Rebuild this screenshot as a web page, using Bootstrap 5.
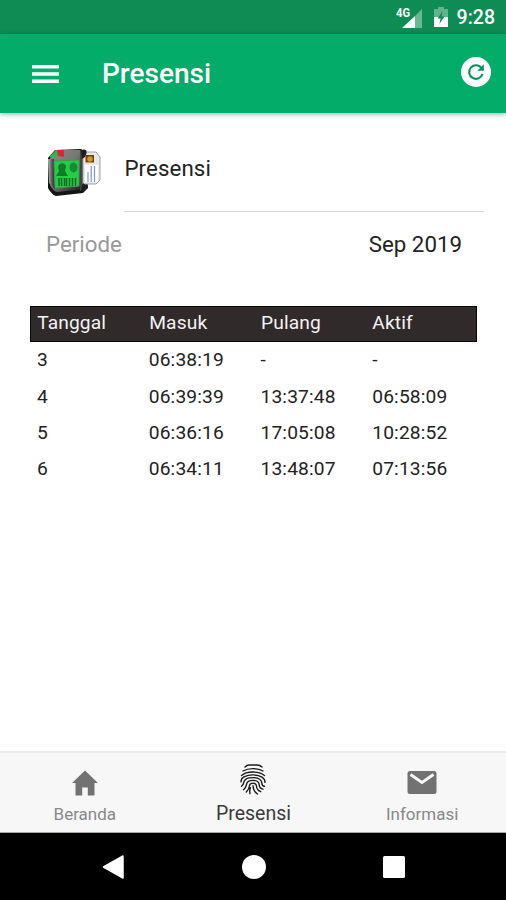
<!DOCTYPE html>
<html lang="id">
<head>
<meta charset="utf-8">
<meta name="viewport" content="width=device-width, initial-scale=1">
<title>Presensi</title>
<link href="https://cdn.jsdelivr.net/npm/bootstrap@5.3.0/dist/css/bootstrap.min.css" rel="stylesheet">
<style>
body{font-family:Roboto,"Liberation Sans",sans-serif;color:#222;line-height:1.2}
svg{display:block;flex:none}
.screen{height:900px;overflow:hidden}
.status-bar{height:34px;background:#0f8c54;padding-right:11px;color:#fff}
.battery{margin-left:9px}
.status-clock{font-size:19.5px;font-weight:500;line-height:34px;padding-top:2px;margin-left:9px}
.app-bar{height:79px;background:#03ac69;padding:0 15px 0 32px;box-shadow:0 1px 5px rgba(40,20,60,.42);z-index:1;position:relative}
.app-title{font-size:28px;font-weight:500;line-height:32px;margin:1px 0 0 43px}
.refresh{margin-bottom:4px}
.item-row{height:99px;padding-left:46px;margin-right:22px}
.reader-icon{margin-top:34px}
.item-label{height:99px;border-bottom:1px solid #d2d2d2;margin-left:23.4px;padding-top:42px;font-size:22.3px;line-height:26px;letter-spacing:.1px}
.period-row{height:66px;padding:0 44px 2px 46px;font-size:22.3px;line-height:26px}
.period-name{color:#999}
.log{width:447px;margin:28px 0 0 30px;font-size:19.2px;line-height:24px;letter-spacing:.15px}
.log-head{background:#302a2a;border:1px solid #090606;color:#f4f2f2;height:36px;padding-bottom:2px;letter-spacing:.12px}
.log-row{height:36.4px}
.log-row>div{padding-left:7px}
.log-head>div{padding-left:6.2px}
.log-head>div+div{padding-left:7px}
.log-head>div+div+div{padding-left:7.6px}
.tab-bar{height:82px;background:#f7f7f7;border-top:2px solid #ececec;border-bottom:1px solid #aaa}
.tab-item{color:#888;font-size:17px;line-height:20px;padding-left:1px}
.tab-item svg{margin-top:13px;margin-bottom:-4px}
.tab-item span{margin-top:8px}
.tab-current{color:#3b3b3b;font-size:19.5px}
.tab-current svg{margin-top:11px;margin-bottom:0}
.tab-current span{margin-top:9px}
.system-nav{height:67px;background:#000;padding:0 101px}
</style>
</head>
<body>
<div class="screen d-flex flex-column bg-white">
  <header class="status-bar d-flex align-items-center justify-content-end">
    <svg width="29" height="24" viewBox="0 0 29 24"><text x="0" y="12" font-size="12" font-weight="700" fill="#fff" textLength="14" lengthAdjust="spacingAndGlyphs">4G</text><path d="M26 4v19h-7V11z" fill="#fff" opacity=".38"/><path d="M19 11v12H6z" fill="#fff"/></svg>
    <svg class="battery" width="14" height="22" viewBox="0 0 14 22"><path d="M4 1h6v2h4v8H0V3h4z" fill="#fff" opacity=".35"/><path d="M0 11h14v10H0z" fill="#fff"/><path d="M8.7 5L3.5 12.5h3.1L5.4 18l5.1-7.5H7.6z" fill="#0f8c54"/></svg>
    <span class="status-clock">9:28</span>
  </header>
  <nav class="app-bar d-flex align-items-center text-white">
    <svg width="27" height="20" viewBox="0 0 27 20"><path d="M0 2.7h27M0 10h27M0 17.3h27" stroke="#fff" stroke-width="3.4"/></svg>
    <h1 class="app-title">Presensi</h1>
    <svg class="refresh ms-auto" width="30" height="30" viewBox="0 0 30 30"><circle cx="15" cy="15" r="15" fill="#fff"/><path d="M20.7 11.4A6.8 6.8 0 1 0 21.5 17" fill="none" stroke="#03945b" stroke-width="2.1"/><path d="M22.8 7.3v6.5h-6.5z" fill="#03945b"/></svg>
  </nav>
  <main class="flex-grow-1">
    <section class="item-row d-flex">
      <svg class="reader-icon" width="55" height="50" viewBox="0 0 55 50">
        <defs><linearGradient id="metal" x2="1" y2="1"><stop stop-color="#8b8b8b"/><stop offset=".45" stop-color="#777"/><stop offset="1" stop-color="#161616"/></linearGradient><linearGradient id="side"><stop stop-color="#bbb"/><stop offset=".5" stop-color="#626262"/><stop offset="1" stop-color="#222"/></linearGradient></defs>
        <path d="M9 3L35 2l5 4 2 35-5 5-27 3q-4-1-8-8V11z" fill="#151515"/>
        <path d="M10 3h24l4 5v34l-27 3q-4-1-7-7V11z" fill="url(#metal)"/>
        <path d="M34 4h6v36l-6 4z" fill="#444"/>
        <path d="M2 12h6l1 30-6-6z" fill="url(#side)"/>
        <path d="M4 9l6-6 2 5-2 2H4z" fill="#25bd43"/><path d="M11 3h7v7l-6-1z" fill="#d42935"/>
        <path d="M8 14l25-1v26l-24 2z" fill="#22ce46" stroke="#489653"/>
        <path d="M12 20c1-5 8-5 8 0l-1 4 3 5H10l3-5z" fill="#127c29"/>
        <ellipse cx="27.5" cy="20.5" rx="4" ry="5" fill="#158d31"/>
        <path d="M13 31v8m2.5-8v8m3-8v8m2-8v8m3-8v8m3-8v8m3-8v8" stroke="#0c6b20" stroke-width="1.5"/>
        <path d="M37 5h13l4 5v23l-4 4H37z" fill="#e8e8ec" stroke="#a1a1a5"/>
        <path d="M35 3c6-2 7 2 4 7l-3 2zM37 36l5 4-4 4-3-2z" fill="#202020"/>
        <path d="M39 18h13v17H39z" fill="#fff"/>
        <path d="M39.500 8h8.500v7.500h-8.500z" fill="#684312"/><circle cx="44" cy="12" r="2.800" fill="#db951b"/>
        <path d="M42 25v10m3.200-16v16m3.300-16v16" stroke="#7d96db" stroke-width="1.200"/>
      </svg>
      <div class="item-label flex-grow-1">Presensi</div>
    </section>
    <section class="period-row d-flex align-items-center justify-content-between">
      <span class="period-name">Periode</span><span>Sep 2019</span>
    </section>
    <section class="log">
      <div class="log-head row g-0 align-items-center"><div class="col-3">Tanggal</div><div class="col-3">Masuk</div><div class="col-3">Pulang</div><div class="col-3">Aktif</div></div>
      <div class="log-row row g-0 align-items-center"><div class="col-3">3</div><div class="col-3">06:38:19</div><div class="col-3">-</div><div class="col-3">-</div></div>
      <div class="log-row row g-0 align-items-center"><div class="col-3">4</div><div class="col-3">06:39:39</div><div class="col-3">13:37:48</div><div class="col-3">06:58:09</div></div>
      <div class="log-row row g-0 align-items-center"><div class="col-3">5</div><div class="col-3">06:36:16</div><div class="col-3">17:05:08</div><div class="col-3">10:28:52</div></div>
      <div class="log-row row g-0 align-items-center"><div class="col-3">6</div><div class="col-3">06:34:11</div><div class="col-3">13:48:07</div><div class="col-3">07:13:56</div></div>
    </section>
  </main>
  <nav class="tab-bar row g-0">
    <div class="tab-item col-4 d-flex flex-column align-items-center">
      <svg width="32" height="34" viewBox="0 0 32 34"><path d="M16 4.500L3 17h3.500v12.500h6.700v-8h5.600v8h6.700V17H29z" fill="#727272"/></svg>
      <span>Beranda</span>
    </div>
    <div class="tab-item tab-current col-4 d-flex flex-column align-items-center">
      <svg width="26" height="31" viewBox="0 0 26 32" preserveAspectRatio="none" fill="none" stroke="#1c1c1c" stroke-width="1.4" stroke-linecap="round">
        <path d="M5 3Q7 1 9 1h8q3 0 5 2M3 7.200Q7 4.700 13 4.700t10 2.500M1.500 12Q5 8.300 13 8.300T24.500 12"/>
        <path d="M1 18.500c0-2.500 1-4.200 3-5.300 5-2.600 13-2.600 18 .3 2 1.300 3 3 3 5.500M1.500 23c1.200-.8 2-2.200 2.300-4 .5-3.300 4-5 9.200-5 5.500 0 8.800 2.300 9 6.500 0 1.500.8 2.500 2.500 2.500M3.500 26.500c2-1.500 2.800-3.500 3.200-6 .4-2.400 2.700-3.600 6.300-3.600 3.800 0 6 1.800 6.200 4.600.2 2.500 1.500 4 3.800 4.500M6.300 29c2-2 3-4.500 3.300-7 .3-1.600 1.500-2.300 3.400-2.300 2.200 0 3.300 1.200 3.500 3.300.2 2.800 1.800 4.800 4.300 5.600M10 30.500c-.7-3 .1-5 .4-6M13 22.500c.2 4 1.300 6.500 4.500 8.500"/>
      </svg>
      <span>Presensi</span>
    </div>
    <div class="tab-item col-4 d-flex flex-column align-items-center">
      <svg width="30" height="34" viewBox="0 0 30 34"><rect x=".5" y="5" width="29" height="23" rx="2.5" fill="#727272"/><path d="M3.500 8.500L15 16.500 26.500 8.500" fill="none" stroke="#f7f7f7" stroke-width="2.8"/></svg>
      <span>Informasi</span>
    </div>
  </nav>
  <footer class="system-nav d-flex align-items-center justify-content-between">
    <svg width="24" height="26" viewBox="0 0 24 26"><path d="M22 2v22L2.500 13z" fill="#fff" stroke="#fff" stroke-width="1.5" stroke-linejoin="round"/></svg>
    <svg width="24" height="24" viewBox="0 0 24 24"><circle cx="12" cy="12" r="12" fill="#fff"/></svg>
    <svg width="22" height="22" viewBox="0 0 22 22"><rect width="22" height="22" rx="1.5" fill="#fff"/></svg>
  </footer>
</div>
<script src="https://cdn.jsdelivr.net/npm/bootstrap@5.3.0/dist/js/bootstrap.bundle.min.js"></script>
</body>
</html>
